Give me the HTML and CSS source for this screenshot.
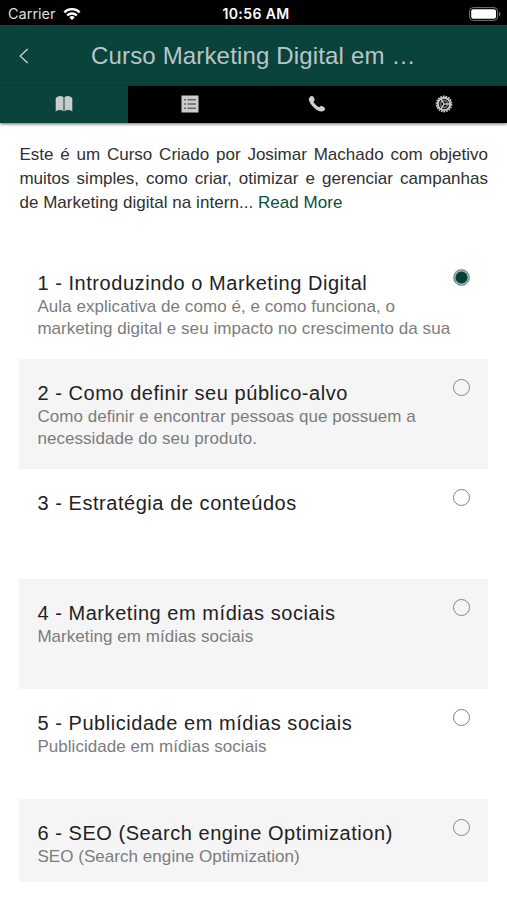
FILE: index.html
```html
<!DOCTYPE html>
<html lang="pt">
<head>
<meta charset="utf-8">
<title>Curso Marketing Digital</title>
<link rel="stylesheet" href="styles.css">
</head>
<body>
<div class="status">
  <div class="carrier"><span>Carrier</span>
    <svg width="18" height="14" viewBox="0 0 18 14" fill="none" stroke="#fff" stroke-width="2.4"><path d="M1.3 5.3a11 11 0 0 1 15.4 0M4.2 8.5a6.8 6.8 0 0 1 9.6 0"/><path d="M9 13 6.3 10.3a3.8 3.8 0 0 1 5.4 0z" fill="#fff" stroke="none"/></svg>
  </div>
  <div class="clock">10:56 AM</div>
  <svg class="battery" width="32" height="14" viewBox="0 0 32 14"><rect x=".6" y=".6" width="28" height="12.8" rx="3.6" fill="none" stroke="#777"/><rect x="2.2" y="2.2" width="24.8" height="9.6" rx="2" fill="#fff"/><path d="M30 4.8q1.6.6 1.6 2.2T30 9.200z" fill="#777"/></svg>
</div>
<header class="bar">
  <svg class="back" width="10" height="16" viewBox="0 0 10 16" fill="none" stroke="#c3cccb" stroke-width="1.4"><path d="M8.700 1 1.200 8l7.500 7"/></svg>
  <h1>Curso Marketing Digital em …</h1>
</header>
<nav class="tabs">
  <div class="tab active"><svg width="18" height="18" viewBox="0 0 18 18" fill="#c9cccc"><path d="M.7 3Q4.500-.6 8.500 2v14.200Q4.500 13.800.7 16.500zM9.500 2q4-2.600 7.800 1v13.500q-3.800-2.700-7.800-.3z"/></svg></div>
  <div class="tab"><svg width="18" height="18" viewBox="0 0 18 18"><path d="M.5.5h17v17H.5z" fill="#ccc"/><path d="M3 4.800h2M6.500 4.800H15M3 9h2M6.500 9H15M3 13.200h2M6.500 13.200H15" stroke="#666" stroke-width="1.500"/></svg></div>
  <div class="tab"><svg width="18" height="18" viewBox="0 0 18 18" fill="#d0d0d0"><path d="M1.700 2.200C3 .7 4.700.8 5.700 2.200c1.100 1.600 1.200 2.900.2 4-.6.700-.3 1.100.5 2.100 1.300 1.600 2.300 2.500 3.700 3.400.9.600 1.300.4 2-.2.800-.7 1.900-.5 3.600.5 1.700 1 1.900 2.200.5 3.500-1.500 1.500-4 1.400-6.900-.3-3.700-2.200-6.800-5.900-8.200-9.500C.600 4.500.700 3.200 1.700 2.200z"/></svg></div>
  <div class="tab"><svg width="18" height="18" viewBox="0 0 18 18" fill="none" stroke="#c8c8c8"><circle cx="9" cy="9" r="7.600" stroke-width="1.600" stroke-dasharray="1.700 .953"/><circle cx="9" cy="9" r="6.200" stroke-width="2"/><circle cx="9" cy="9" r="3.500" stroke="#666" stroke-width="2"/><path d="M9 9 6 3.800M9 9h6M9 9l-3 5.200" stroke-width="1.500"/></svg></div>
</nav>
<main>
  <div class="intro"><p class="full">Este é um Curso Criado por Josimar Machado com objetivo</p><p class="full">muitos simples, como criar, otimizar e gerenciar campanhas</p><p class="tail">de Marketing digital na intern... <a>Read More</a></p></div>
  <section class="list">
    <article class="item"><div class="text"><h2>1 - Introduzindo o Marketing Digital</h2><p>Aula explicativa de como é, e como funciona, o<br>marketing digital e seu impacto no crescimento da sua</p></div><span class="radio on"></span></article>
    <article class="item"><div class="text"><h2>2 - Como definir seu público-alvo</h2><p>Como definir e encontrar pessoas que possuem a<br>necessidade do seu produto.</p></div><span class="radio"></span></article>
    <article class="item"><div class="text"><h2>3 - Estratégia de conteúdos</h2></div><span class="radio"></span></article>
    <article class="item"><div class="text"><h2>4 - Marketing em mídias sociais</h2><p>Marketing em mídias sociais</p></div><span class="radio"></span></article>
    <article class="item"><div class="text"><h2>5 - Publicidade em mídias sociais</h2><p>Publicidade em mídias sociais</p></div><span class="radio"></span></article>
    <article class="item last"><div class="text"><h2>6 - SEO (Search engine Optimization)</h2><p>SEO (Search engine Optimization)</p></div><span class="radio"></span></article>
  </section>
</main>
</body>
</html>
```
FILE: styles.css
```css
* { box-sizing: border-box; }
body { margin: 0; height: 900px; overflow: hidden; background: #fff; font-family: "Liberation Sans", Arial, sans-serif; }
h1, h2, p { margin: 0; font-weight: 400; }
svg { display: block; }
.status { height: 25px; background: #000; color: #fff; display: grid; grid-template-columns: 1fr auto 1fr; align-items: center; padding: 2px 6px 0 8px; }
.carrier { display: flex; align-items: center; gap: 7px; font: 14.500px/20px Inter, sans-serif; color: #ddd; }
.clock { font: 600 14px/20px Inter, sans-serif; letter-spacing: .4px; padding-left: 3px; }
.battery { justify-self: end; }
.bar { height: 61px; background: #09433c; display: flex; align-items: center; padding-left: 19px; }
.back { margin-right: 62px; }
.bar h1 { font-size: 24px; line-height: 30px; color: #b9c5c8; white-space: nowrap; letter-spacing: .16px; padding-top: 1px; }
.tabs { height: 37px; display: grid; grid-template-columns: 127.500px 125.500px 127px 127px; background: #000; box-shadow: 0 1px 3px rgba(0,0,0,.6); }
.tab { display: flex; align-items: center; justify-content: center; padding-bottom: 2px; }
.tab.active { background: #09433c; padding-left: 1px; }
main { padding: 19.500px 19px 0 19.400px; }
.intro { font-size: 17px; line-height: 24.400px; color: #303030; height: 106.500px; white-space: nowrap; }
.full { text-align-last: justify; }
.tail { letter-spacing: .04px; }
.intro a { color: #0c4e40; }
.item { height: 110px; padding: 23px 18.400px 0 18px; display: flex; justify-content: space-between; white-space: nowrap; }
.item:nth-child(even) { background: #f5f5f5; }
.item.last { height: 83px; }
.item h2 { font-size: 20px; line-height: 22px; letter-spacing: .55px; color: #222; }
.item p { font-size: 17px; line-height: 22px; letter-spacing: .05px; color: #7c7c7c; padding-top: 2px; }
.radio { width: 17px; height: 17px; flex: none; border: 1px solid #6b8f87; border-radius: 50%; margin-top: -3.500px; }
.radio.on { background: #063f36; border-color: #8fb0a9; box-shadow: inset 0 0 0 1.500px #9dbcb5; }
```
